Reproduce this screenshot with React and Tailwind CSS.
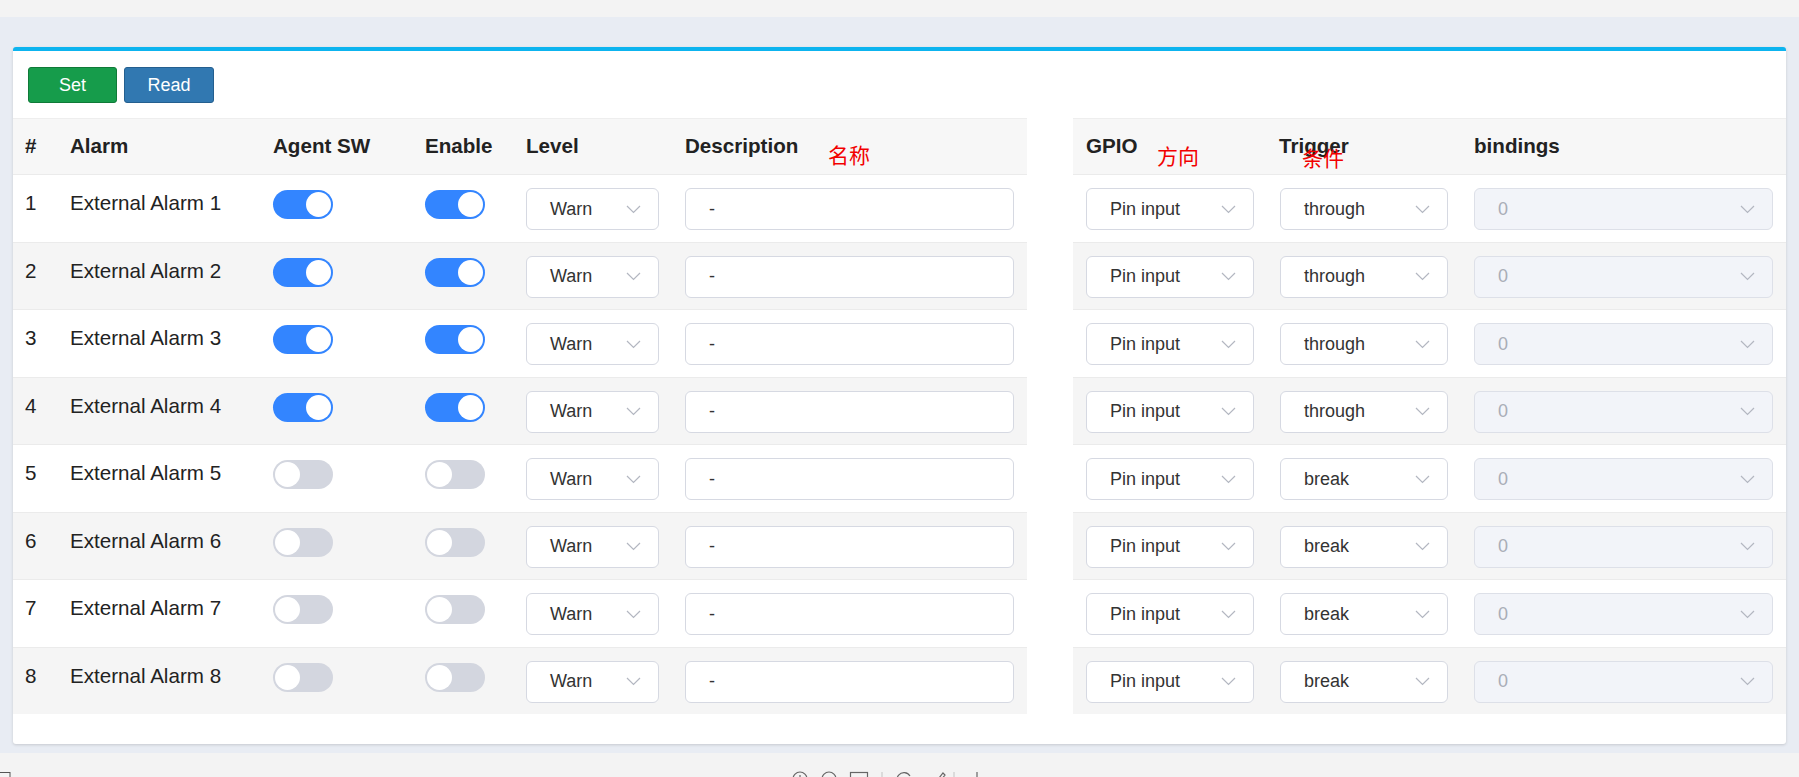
import React from "react";

const rows = [1, 2, 3, 4, 5, 6, 7, 8].map((i) => ({
  id: i,
  name: `External Alarm ${i}`,
  on: i <= 4,
  trigger: i <= 4 ? "through" : "break",
}));

const Chevron = () => (
  <svg width="15" height="9" viewBox="0 0 15 9" fill="none">
    <path d="M1 1l6.5 6.5L14 1" stroke="#b3b7c1" strokeWidth="1.2" />
  </svg>
);

const Select = ({ value, disabled = false }) => (
  <div
    className={`h-[42px] w-full rounded-[6px] border-[1.5px] flex items-center justify-between pl-[23px] pr-[17px] text-[18px] ${
      disabled
        ? "bg-[#f2f4f9] border-[#dde0e8] text-[#a9adb7]"
        : "bg-white border-[#d6d9e2] text-[#333]"
    }`}
  >
    <span>{value}</span>
    <Chevron />
  </div>
);

const Toggle = ({ on }) => (
  <div
    className={`w-[60px] h-[29px] rounded-full p-[2px] flex ${
      on ? "bg-[#3385ff] justify-end" : "bg-[#d3d6df] justify-start"
    }`}
  >
    <div className="w-[25px] h-[25px] rounded-full bg-white" />
  </div>
);

// red hand-written notes over the header
const Note = ({ children, className }) => (
  <span
    className={`absolute text-[21px] leading-none font-normal text-[#f20000] ${className}`}
    style={{ fontFamily: '"Noto Sans CJK SC", sans-serif' }}
  >
    {children}
  </span>
);

const leftCols = "grid grid-cols-[45px_203px_152px_101px_159px_1fr] pl-[12px] pr-[13px]";
const rightCols = "grid grid-cols-[194px_194px_1fr] pl-[13px] pr-[13px]";

const App = () => {
  return (
    <div
      className="w-full h-[777px] overflow-hidden bg-[#f3f3f3] flex flex-col"
      style={{ fontFamily: '"Liberation Sans", Arial, sans-serif' }}
    >
      <div className="h-[17px] shrink-0" />
      <section className="bg-[#e8ecf3] pt-[30px] px-[13px] pb-[9px] shrink-0">
        <div className="bg-white border-t-[4px] border-[#0db4ef] rounded-[3px] shadow-[0_1px_3px_rgba(0,0,0,0.15)] h-[697px] flex flex-col">
          <div className="flex gap-[7px] pl-[15px] pt-[16px]">
            <button className="w-[89px] h-[36px] rounded-[3px] bg-[#169c4b] border border-[#0f7a38] text-white text-[18px]">
              Set
            </button>
            <button className="w-[90px] h-[36px] rounded-[3px] bg-[#3178b1] border border-[#245f8f] text-white text-[18px]">
              Read
            </button>
          </div>

          <div className="flex mt-[15px]">
            <div className="w-[1014px]">
              <div className={`${leftCols} relative h-[56px] items-center bg-[#f7f7f7] border-t border-[#eeeeee] text-[20.6px] font-bold text-[#222]`}>
                <span>#</span>
                <span>Alarm</span>
                <span>Agent SW</span>
                <span>Enable</span>
                <span>Level</span>
                <span>Description</span>
                <Note className="left-[815px] top-[25px]">名称</Note>
              </div>
              {rows.map((r) => (
                <div
                  key={r.id}
                  className={`${leftCols} h-[67.5px] items-start border-t border-[#ebebeb] text-[20.6px] text-[#222] ${
                    r.id % 2 === 0 ? "bg-[#f5f5f5]" : "bg-white"
                  }`}
                >
                  <span className="pt-[16px] leading-[24px]">{r.id}</span>
                  <span className="pt-[16px] leading-[24px]">{r.name}</span>
                  <div className="pt-[15px]">
                    <Toggle on={r.on} />
                  </div>
                  <div className="pt-[15px]">
                    <Toggle on={r.on} />
                  </div>
                  <div className="pt-[13px] w-[133px]">
                    <Select value="Warn" />
                  </div>
                  <div className="pt-[13px]">
                    <div className="h-[42px] w-full rounded-[6px] border-[1.5px] border-[#d6d9e2] bg-white flex items-center pl-[23px] text-[18px] text-[#333]">
                      -
                    </div>
                  </div>
                </div>
              ))}
            </div>

            <div className="w-[46px]" />

            <div className="flex-1">
              <div className={`${rightCols} relative h-[56px] items-center bg-[#f7f7f7] border-t border-[#eeeeee] text-[20.6px] font-bold text-[#222]`}>
                <span>GPIO</span>
                <span className="-ml-[1px]">Trigger</span>
                <span>bindings</span>
                <Note className="left-[84px] top-[26px]">方向</Note>
                <Note className="left-[229px] top-[28px]">条件</Note>
              </div>
              {rows.map((r) => (
                <div
                  key={r.id}
                  className={`${rightCols} h-[67.5px] items-start border-t border-[#ebebeb] ${
                    r.id % 2 === 0 ? "bg-[#f5f5f5]" : "bg-white"
                  }`}
                >
                  <div className="pt-[13px] w-[168px]">
                    <Select value="Pin input" />
                  </div>
                  <div className="pt-[13px] w-[168px]">
                    <Select value={r.trigger} />
                  </div>
                  <div className="pt-[13px]">
                    <Select value="0" disabled />
                  </div>
                </div>
              ))}
            </div>
          </div>
        </div>
      </section>

      <div className="relative flex-1">
        <svg className="absolute left-0 top-[19px]" width="12" height="12" viewBox="0 0 12 12" fill="none">
          <rect x="-2" y="0.5" width="12" height="12" stroke="#555" />
        </svg>
        <svg className="absolute left-[792px] top-[17px]" width="190" height="16" viewBox="0 0 190 16" fill="none" stroke="#666" strokeWidth="1.2">
          <circle cx="8" cy="9" r="7" />
          <path d="M8 5v3" />
          <circle cx="37" cy="9" r="7" />
          <rect x="58.5" y="2.5" width="17" height="14" />
          <path d="M90 2v14" stroke="#ccc" />
          <path d="M118 6a7 7 0 1 0 1 4" />
          <path d="M143 13l8-10 2 2-8 10" />
          <path d="M162 2v14" stroke="#ccc" />
          <path d="M185 2v14" />
        </svg>
      </div>
    </div>
  );
};

export default App;
